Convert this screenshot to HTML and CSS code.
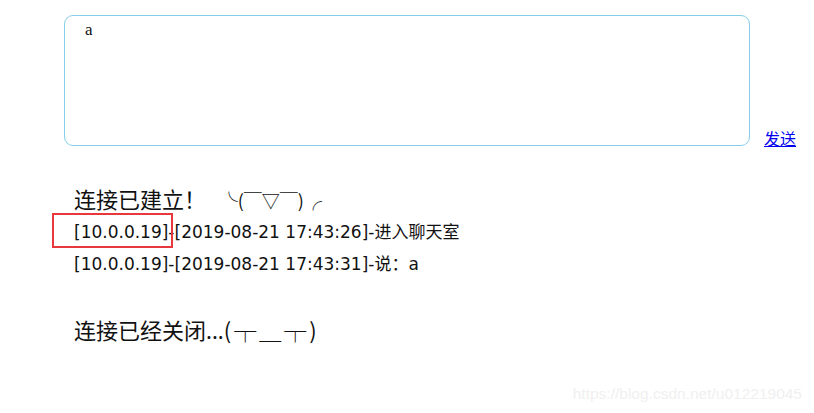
FILE: index.html
```html
<!DOCTYPE html>
<html lang="zh">
<head>
  <meta charset="UTF-8" />
  <title>聊天室</title>
  <link rel="stylesheet" href="styles.css">
</head>
<body>
  <div class="chat">
    <div class="sender">
      <textarea class="input" id="msg">a</textarea>
      <a href="#" class="send">发送</a>
    </div>

    <div class="log">
      <div class="notice">连接已建立！ <span class="face">╰(￣▽￣)╭</span></div>
      <div class="line">[10.0.0.19]-[2019-08-21 17:43:26]-进入聊天室</div>
      <div class="line">[10.0.0.19]-[2019-08-21 17:43:31]-说：a</div>
      <div class="notice closed">连接已经关闭...<span class="face sad">(┬＿┬)</span></div>
      <span class="mark"></span>
    </div>
  </div>

  <div class="watermark">https://blog.csdn.net/u012219045</div>
</body>
</html>
```

FILE: styles.css
```css
body {
  margin: 0;
  background: #fff;
  font-family: "Noto Sans", "Noto Sans CJK SC", sans-serif;
  color: #111;
}

.chat {
  padding: 15px 0 0 64px;
}

.sender {
  display: flex;
  align-items: flex-end;
}

.input {
  width: 686px;
  height: 131px;
  box-sizing: border-box;
  padding: 4px 20px;
  border: 1px solid #87cfe9;
  border-radius: 9px;
  font-family: "Liberation Serif", serif;
  font-size: 17px;
  color: #111;
  resize: none;
  outline: none;
}

.send {
  margin-left: 14px;
  margin-bottom: -3px;
  font-size: 16px;
  line-height: 20px;
  color: #0000ee;
}

.log {
  position: relative;
  margin-top: 37px;
  padding-left: 10px;
}

.notice {
  font-size: 22px;
  line-height: 32px;
}

.face {
  margin-left: 8px;
  font-family: "Noto Sans CJK SC", sans-serif;
  font-size: 18px;
}

.face.sad {
  margin-left: 0;
  font-size: 22px;
  letter-spacing: 3px;
}

.line {
  font-family: "DejaVu Sans", "Noto Sans CJK SC", sans-serif;
  font-size: 17px;
  line-height: 32px;
}

.closed {
  margin-top: 33px;
}

.mark {
  position: absolute;
  left: -12px;
  top: 30px;
  width: 117px;
  height: 31px;
  border: 2px solid #e8383d;
}

.watermark {
  position: absolute;
  right: 12px;
  bottom: 10px;
  font-family: "Liberation Sans", sans-serif;
  font-size: 15.5px;
  color: #f0f0f0;
}
```
